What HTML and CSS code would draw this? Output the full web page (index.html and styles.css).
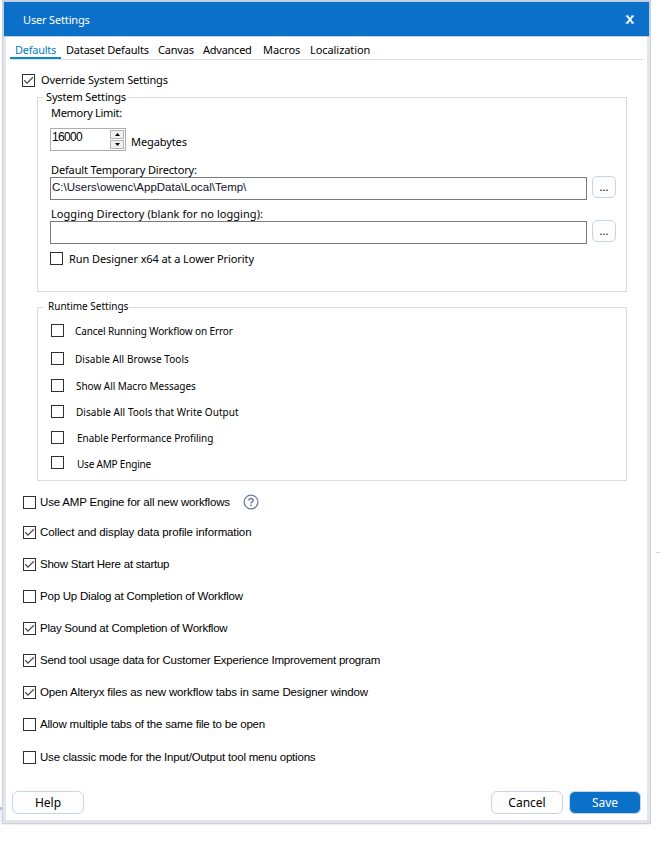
FILE: index.html
```html
<!DOCTYPE html>
<html lang="en">
<head>
<meta charset="utf-8">
<title>User Settings</title>
<link rel="stylesheet" href="styles.css">
</head>
<body>
<svg class="defs" width="0" height="0" aria-hidden="true"><symbol id="tick" viewBox="0 0 13 13"><path d="M2.2 6.3 5 9.1 10.9 3.2" fill="none" stroke="#484848" stroke-width="1.25"/></symbol></svg>
<div class="backdrop"></div>
<div class="mark"></div>
<main class="dialog">
  <header class="titlebar"><h1>User Settings</h1>
    <button class="close" aria-label="Close"><svg width="10" height="9" viewBox="0 0 10 9"><path d="M2.2 1 7.8 8M7.8 1 2.2 8" stroke="#fff" stroke-width="2" fill="none"/><path d="M.5 1H3.7M6.3 1H9.2M.5 8H3.7M6.3 8H9.2" stroke="#fff" stroke-width="1"/></svg></button>
  </header>
  <div class="body">
    <nav class="tabs">
      <a class="tab active">Defaults</a><a class="tab t2">Dataset Defaults</a><a class="tab t3">Canvas</a><a class="tab t4">Advanced</a><a class="tab t5">Macros</a><a class="tab t6">Localization</a>
    </nav>
    <label class="override"><span class="box"><svg><use href="#tick"/></svg></span><span>Override System Settings</span></label>
    <section class="group system">
      <h2 class="legend"><span>System Settings</span></h2>
      <div class="caption memory">Memory Limit:</div>
      <div class="memory-row">
        <div class="spinner"><span>16000</span><div class="arrows"><i><svg width="5" height="3"><path d="M0 3 2.5 0 5 3z"/></svg></i><i><svg width="5" height="3"><path d="M0 0 2.5 3 5 0z"/></svg></i></div></div>
        <span class="unit">Megabytes</span>
      </div>
      <div class="caption tempdir">Default Temporary Directory:</div>
      <div class="path-row"><div class="field">C:\Users\owenc\AppData\Local\Temp\</div><button class="browse">...</button></div>
      <div class="caption logdir">Logging Directory (blank for no logging):</div>
      <div class="path-row"><div class="field"></div><button class="browse">...</button></div>
      <label class="priority"><span class="box"></span><span>Run Designer x64 at a Lower Priority</span></label>
    </section>
    <section class="group runtime">
      <h2 class="legend"><span>Runtime Settings</span></h2>
      <label class="r1"><span class="box"></span><span>Cancel Running Workflow on Error</span></label>
      <label class="r2"><span class="box"></span><span>Disable All Browse Tools</span></label>
      <label class="r3"><span class="box"></span><span>Show All Macro Messages</span></label>
      <label class="r4"><span class="box"></span><span>Disable All Tools that Write Output</span></label>
      <label class="r5"><span class="box"></span><span>Enable Performance Profiling</span></label>
      <label class="r6"><span class="box"></span><span>Use AMP Engine</span></label>
    </section>
    <section class="options">
      <label class="first"><span class="box"></span><span class="o1">Use AMP Engine for all new workflows</span>
        <svg class="help-icon" width="16" height="16" viewBox="0 0 16 16"><circle cx="8" cy="8" r="6.9" fill="none" stroke="#6c7ca3" stroke-width="1.3"/><path d="M5.9 6.5C5.9 3.9 10.2 4 10.2 6.4 10.2 7.8 8 7.8 8 9.4" fill="none" stroke="#6c7ca3" stroke-width="1.5"/><path d="M7.2 10.6h1.6v1.5H7.2z" fill="#6c7ca3"/></svg></label>
      <label><span class="box"><svg><use href="#tick"/></svg></span><span class="o2">Collect and display data profile information</span></label>
      <label><span class="box"><svg><use href="#tick"/></svg></span><span class="o3">Show Start Here at startup</span></label>
      <label><span class="box"></span><span class="o4">Pop Up Dialog at Completion of Workflow</span></label>
      <label><span class="box"><svg><use href="#tick"/></svg></span><span class="o5">Play Sound at Completion of Workflow</span></label>
      <label><span class="box"><svg><use href="#tick"/></svg></span><span class="o6">Send tool usage data for Customer Experience Improvement program</span></label>
      <label><span class="box"><svg><use href="#tick"/></svg></span><span class="o7">Open Alteryx files as new workflow tabs in same Designer window</span></label>
      <label><span class="box"></span><span class="o8">Allow multiple tabs of the same file to be open</span></label>
      <label class="last"><span class="box"></span><span class="o9">Use classic mode for the Input/Output tool menu options</span></label>
    </section>
    <footer class="actions"><button class="btn help">Help</button><button class="btn">Cancel</button><button class="btn primary">Save</button></footer>
  </div>
</main>
</body>
</html>
```
FILE: styles.css
```css
* { box-sizing: border-box; }
body { margin: 0; height: 845px; overflow: hidden; background: #fff; color: #000; font: 11px/14px "Noto Sans", sans-serif; white-space: nowrap; }
.defs { position: absolute; }
h1, h2 { margin: 0; font: inherit; }
button { padding: 0; font: inherit; color: inherit; }
.backdrop { position: absolute; left: 0; top: 807px; width: 3px; height: 17px; background: #edf1fa; border-top: 3px solid #b4c3df; }
.mark { position: absolute; left: 656px; top: 552px; width: 4px; height: 1px; background: #d4d4d4; }
.dialog { position: relative; width: 649px; height: 824px; margin-left: 2px; border: 1px solid #c6d1e8; box-shadow: 0 1px #eef1f9; background: #e5e5e5; }
.titlebar { display: flex; align-items: center; justify-content: space-between; height: 36px; padding: 0 9px 0 19px; background: #0b71c8; border: 1px solid #c0cbdc; border-top-color: #b9c9df; color: #fff; }
.titlebar h1 { font-size: 11px; letter-spacing: -.16px; padding-top: 1px; }
.close { display: grid; place-items: center; width: 20px; height: 24px; border: 0; background: transparent; }
.body { width: 641px; height: 783px; margin-left: 3px; background: #fff; overflow: hidden; }
.tabs { display: flex; height: 23px; margin: 0 4px; border-bottom: 1px solid #dae0ea; line-height: 26px; }
.tab { height: 22px; margin-right: 10px; letter-spacing: -.07px; }
.tab.active { width: 51px; padding-left: 5px; margin-right: 5px; letter-spacing: -.25px; color: #087cc0; border-bottom: 2px solid #0c88c9; }
.t2 { width: 83px; margin-right: 9px; letter-spacing: -.18px; } .t3 { width: 35px; letter-spacing: -.2px; } .t4 { width: 49px; margin-right: 11px; letter-spacing: -.25px; } .t5 { width: 37px; }
label { display: flex; align-items: center; }
.box { display: block; flex: none; width: 13px; height: 13px; border: 1px solid #303030; background: #fff; }
.box svg { display: block; width: 13px; height: 13px; margin: -1px; }
.override { height: 14px; margin: 13px 0 0 16px; gap: 6px; letter-spacing: -.14px; }
.group { width: 590px; margin-left: 31px; border: 1px solid #dcdcdc; }
.legend { height: 14px; margin-top: -8px; }
.legend span { display: inline-block; background: #fff; }
.system { height: 195px; margin-top: 10px; }
.system .legend span { margin-left: 5px; padding: 0 2px 0 3px; letter-spacing: -.14px; }
.caption { height: 14px; margin-left: 13px; }
.memory { margin-top: 2px; letter-spacing: -.3px; }
.memory-row { display: flex; gap: 5px; height: 23px; margin: 8px 0 0 12px; }
.spinner { display: flex; justify-content: space-between; width: 76px; height: 23px; padding: 1px 1px 1px 1px; border: 1px solid #abadb3; font: 12px/15px "Liberation Sans", sans-serif; letter-spacing: -.65px; }
.arrows { display: grid; grid-template-rows: 9px 9px; gap: 1px; width: 14px; }
.arrows i { display: grid; place-items: center; border: 1px solid #b4b4b4; background: #f0f0f0; }
.arrows svg { display: block; }
.unit { padding-top: 7px; letter-spacing: -.1px; }
.tempdir { margin-top: 12px; letter-spacing: -.14px; }
.path-row { display: flex; gap: 5px; height: 23px; margin-left: 12px; }
.field { width: 537px; height: 23px; padding-left: 1px; border: 1px solid #7a7a7a; font: 11.5px/19px "Liberation Sans", sans-serif; color: #101028; }
.browse { width: 24px; height: 22px; margin-top: -1px; border: 1px solid #c7d3ea; border-radius: 5px; background: #fdfdfd; line-height: 20px; }
.logdir { margin-top: 7px; letter-spacing: .05px; }
.priority { height: 14px; margin: 7px 0 0 12px; gap: 6px; letter-spacing: -.09px; }
.priority span + span { padding-top: 1px; }
.runtime { height: 174px; margin-top: 15px; font-size: 10px; }
.runtime .legend { height: 15px; margin-top: -9px; line-height: 14px; }
.runtime .legend span { margin-left: 5px; padding: 0 0 0 5px; }
.runtime label { height: 15px; margin-left: 13px; gap: 11px; align-items: flex-start; line-height: 15px; }
.runtime .r1 { margin-top: 10px; letter-spacing: -.12px; } .r2, .r3, .r4, .r5, .r6 { margin-top: 12px; }
.runtime .r2 { margin-top: 13px; letter-spacing: .04px; } .runtime .r4, .runtime .r5 { margin-top: 11px; } .runtime .r6 { margin-top: 10px; letter-spacing: -.2px; line-height: 17px; }
.runtime .r3, .runtime .r4 { gap: 12px; } .runtime .r5, .runtime .r6 { gap: 13px; }
.runtime .r3, .runtime .r5 { letter-spacing: -.04px; } .runtime .r4 { letter-spacing: .04px; }
.options { margin: 15px 0 0 17px; font: 11.5px/12px "Liberation Sans", sans-serif; }
.options label { height: 13px; margin-top: 19px; gap: 4px; align-items: flex-start; }
.options .first { margin: 0 0 17px; } .options .first + label { margin-top: 17px; } .options .last { margin-top: 20px; }
.o1 { width: 190px; letter-spacing: -.17px; }
.o2 { letter-spacing: -.12px; }
.o3, .o5, .o6 { letter-spacing: -.24px; }
.o4 { letter-spacing: -.22px; }
.o7 { letter-spacing: -.13px; }
.o8 { letter-spacing: -.19px; }
.o9 { letter-spacing: -.2px; }
.help-icon { margin: -2px 0 0 9px; }
.actions { display: flex; gap: 7px; margin: 27px 6px 0; font-size: 12px; }
.btn { width: 72px; height: 23px; border: 1px solid #c7d3ea; border-radius: 6px; background: #fdfdfd; }
.help { margin-right: auto; }
.primary { margin-left: -1px; color: #fff; background: #0b71c8; }
```
